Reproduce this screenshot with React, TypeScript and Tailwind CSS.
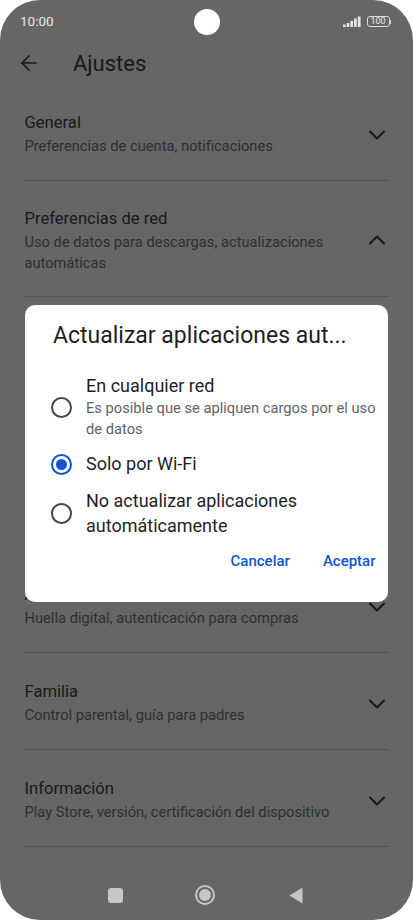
import React from 'react';
import { ArrowLeft, ChevronDown, ChevronUp } from 'lucide-react';

const font = { fontFamily: 'Roboto, sans-serif' };

interface RowProps {
  title: string;
  sub: string;
  up?: boolean;
  className?: string;
}

const Row: React.FC<RowProps> = ({ title, sub, up, className }) => (
  <div className={`flex items-center justify-between border-b border-[#555555] ${className ?? ''}`}>
    <div className="min-w-0 pl-[0.5px] pt-[4px]">
      <div className="text-[16.6px] leading-[24px] text-[#181818]">{title}</div>
      <div className="mt-[1px] w-[320px] text-[14.7px] leading-[21px] text-[#2e2e2e]">{sub}</div>
    </div>
    <div className={up ? 'mr-[-2px] mt-[2px]' : 'mr-[-2px] mt-[5px]'}>
      {up ? <ChevronUp size={28} strokeWidth={1.8} className="text-[#181818]" /> : <ChevronDown size={28} strokeWidth={1.8} className="text-[#181818]" />}
    </div>
  </div>
);

const Radio: React.FC<{ on?: boolean }> = ({ on }) => (
  <div className={`flex h-[21px] w-[21px] shrink-0 items-center justify-center rounded-full border-2 ${on ? 'border-[#0b57d0]' : 'border-[#444746]'}`}>
    {on && <div className="h-[11px] w-[11px] rounded-full bg-[#0b57d0]" />}
  </div>
);

export default function App() {
  return (
    <div className="relative h-[920px] w-[413px] overflow-hidden bg-white" style={font}>
      <div className="flex h-full flex-col rounded-[40px] bg-[#666666]">
        <div className="grid h-[42px] shrink-0 grid-cols-[1fr_auto_1fr] items-center px-[20px] pt-[1px]">
          <span className="text-[13.5px] text-[#e6e6e6]">10:00</span>
          <div className="h-[26px] w-[26px] rounded-full bg-white" />
          <div className="mr-[2px] flex items-center justify-end gap-[6px]">
            <svg width="18" height="12" viewBox="0 0 18 12" fill="#e8e8e8">
              <rect x="0" y="8.5" width="2.6" height="2.5" />
              <rect x="3.7" y="7" width="2.6" height="4" />
              <rect x="7.4" y="5" width="2.6" height="6" />
              <rect x="11.1" y="2.5" width="2.6" height="8.5" />
              <rect x="14.8" y="0.5" width="2.8" height="10.5" />
            </svg>
            <div className="flex items-center">
              <div className="flex h-[11px] w-[23px] items-center justify-center rounded-[3px] border border-[#dcdcdc] text-[9px] leading-none text-[#e6e6e6]">100</div>
              <div className="h-[4px] w-[1.5px] bg-[#dcdcdc]" />
            </div>
          </div>
        </div>
        <div className="flex h-[42px] shrink-0 items-center pl-[17px]">
          <ArrowLeft size={24} strokeWidth={1.7} className="text-[#181818]" />
          <span className="ml-[32px] text-[22px] text-[#181818]">Ajustes</span>
        </div>
        <div className="px-[24px]">
          <Row title="General" sub="Preferencias de cuenta, notificaciones" className="h-[97px]" />
          <Row title="Preferencias de red" sub="Uso de datos para descargas, actualizaciones automáticas" up className="h-[116px]" />
          <div className="h-[259px]" />
          <Row title="Autenticación" sub="Huella digital, autenticación para compras" className="h-[97px]" />
          <Row title="Familia" sub="Control parental, guía para padres" className="h-[97px]" />
          <Row title="Información" sub="Play Store, versión, certificación del dispositivo" className="h-[97px]" />
        </div>
        <div className="mt-auto mb-[13px] flex h-[24px] items-center">
          <div className="ml-[108px] h-[15px] w-[15px] rounded-[3px] bg-[#c6c6c6]" />
          <div className="ml-[72px] flex h-[20px] w-[20px] items-center justify-center rounded-full border-2 border-[#c6c6c6]">
            <div className="h-[12px] w-[12px] rounded-full bg-[#c6c6c6]" />
          </div>
          <svg className="ml-[74px]" width="14" height="17" viewBox="0 0 14 17" fill="#c6c6c6">
            <path d="M13.5 0.5 L0.5 8.5 L13.5 16.5 Z" />
          </svg>
        </div>
      </div>

      <div className="absolute left-[25px] top-[305px] flex h-[297px] w-[363px] flex-col rounded-[10px] bg-white">
        <div className="pl-[28px] pt-[17px] text-[23px] leading-[28px] text-[#1f1f1f]">Actualizar aplicaciones aut...</div>
        <div className="mt-[24px] flex items-center pl-[26px]">
          <Radio />
          <div className="ml-[14px]">
            <div className="text-[18px] leading-[24px] text-[#1f1f1f]">En cualquier red</div>
            <div className="w-[295px] text-[14.7px] leading-[21px] text-[#5f6368]">Es posible que se apliquen cargos por el uso de datos</div>
          </div>
        </div>
        <div className="mt-[12px] flex items-center pl-[26px]">
          <Radio on />
          <div className="ml-[14px] text-[18px] leading-[24px] text-[#1f1f1f]">Solo por Wi-Fi</div>
        </div>
        <div className="mt-[12px] flex items-center pl-[26px]">
          <Radio />
          <div className="ml-[14px] text-[18px] leading-[25px] text-[#1f1f1f]">No actualizar aplicaciones automáticamente</div>
        </div>
        <div className="mt-[12px] flex justify-end gap-[33px] pr-[12.5px] text-[15px] font-medium text-[#0b57d0]">
          <span>Cancelar</span>
          <span>Aceptar</span>
        </div>
      </div>
    </div>
  );
}
